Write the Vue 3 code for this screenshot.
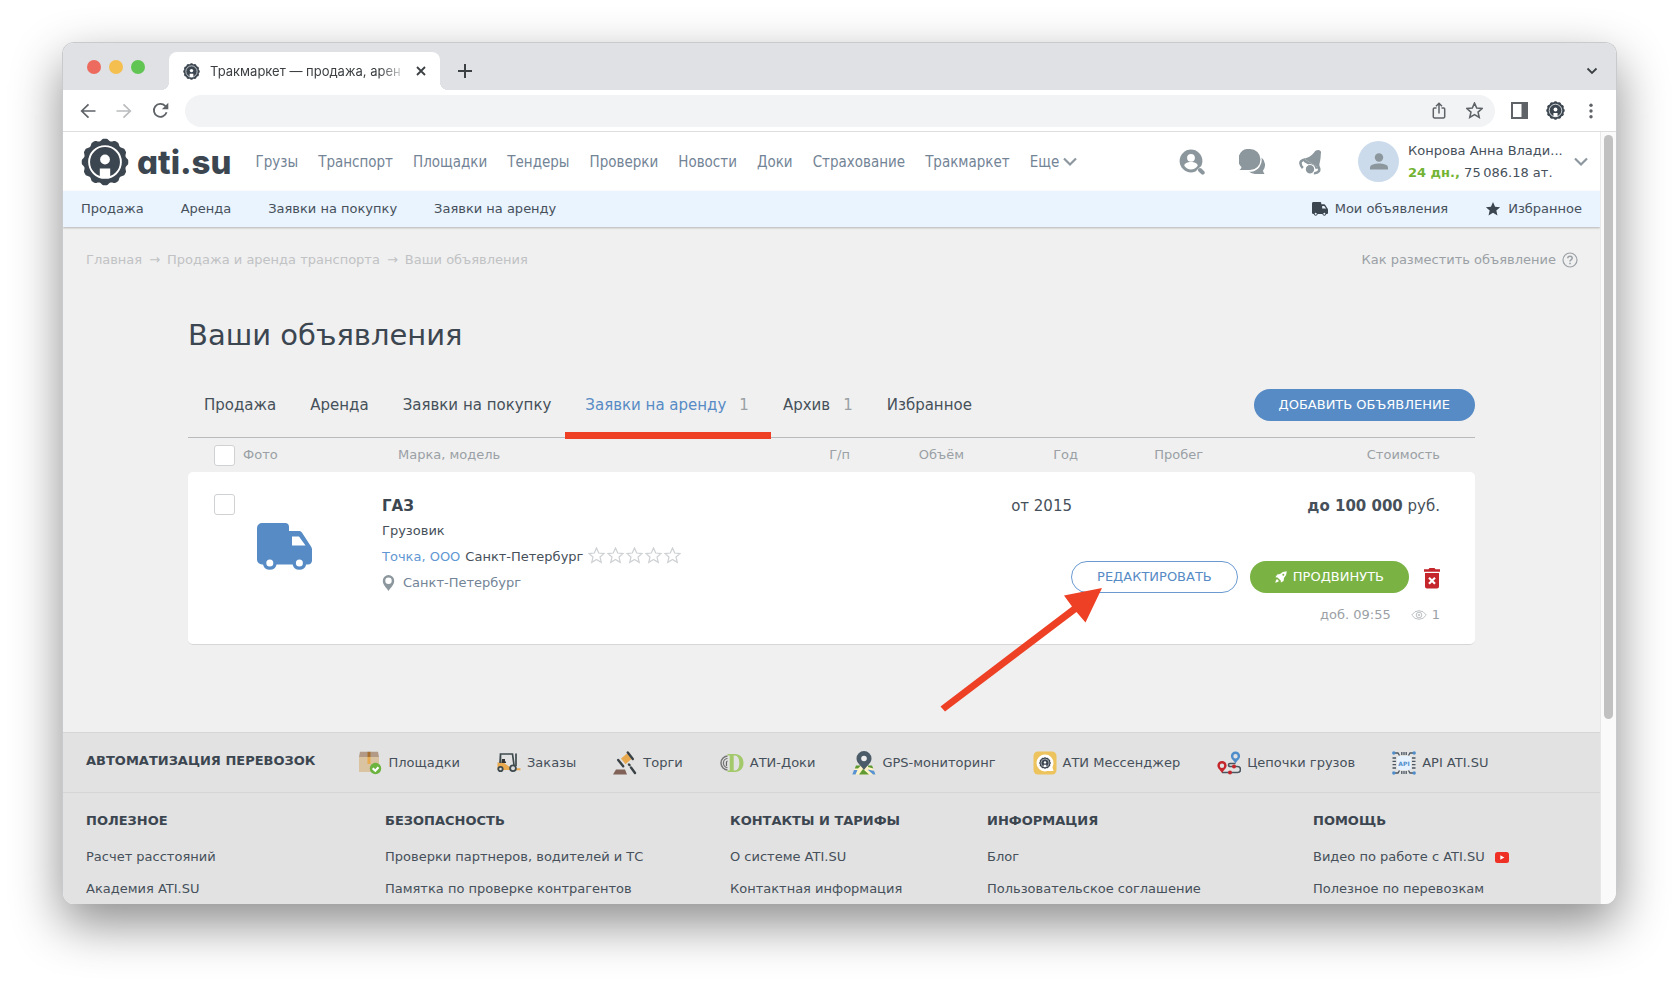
<script setup>
import { ref } from 'vue'

const gear = (() => {
  const pts = []
  for (let i = 0; i < 240; i++) {
    const a = (i / 240) * Math.PI * 2
    const wave = Math.min(0.6, Math.cos(a * 12) * 1.2)
    const r = 22.6 + 1.1 * wave
    pts.push(`${(24 + r * Math.sin(a)).toFixed(2)} ${(24 - r * Math.cos(a)).toFixed(2)}`)
  }
  return `M${pts.join('L')}Z`
})()

const nav = ['Грузы', 'Транспорт', 'Площадки', 'Тендеры', 'Проверки', 'Новости', 'Доки', 'Страхование', 'Тракмаркет']
const subnav = ['Продажа', 'Аренда', 'Заявки на покупку', 'Заявки на аренду']
const tabs = [
  { name: 'Продажа' },
  { name: 'Аренда' },
  { name: 'Заявки на покупку' },
  { name: 'Заявки на аренду', count: 1 },
  { name: 'Архив', count: 1 },
  { name: 'Избранное' },
]
const active = ref('Заявки на аренду')
const address = ref('')
const services = [
  { id: 'box', name: 'Площадки' },
  { id: 'lift', name: 'Заказы' },
  { id: 'hammer', name: 'Торги' },
  { id: 'docs', name: 'АТИ-Доки' },
  { id: 'gps', name: 'GPS-мониторинг' },
  { id: 'chat', name: 'АТИ Мессенджер' },
  { id: 'route', name: 'Цепочки грузов' },
  { id: 'api', name: 'API ATI.SU' },
]
const columns = [
  { title: 'ПОЛЕЗНОЕ', links: ['Расчет расстояний', 'Академия ATI.SU'] },
  { title: 'БЕЗОПАСНОСТЬ', links: ['Проверки партнеров, водителей и ТС', 'Памятка по проверке контрагентов'] },
  { title: 'КОНТАКТЫ И ТАРИФЫ', links: ['О системе ATI.SU', 'Контактная информация'] },
  { title: 'ИНФОРМАЦИЯ', links: ['Блог', 'Пользовательское соглашение'] },
  { title: 'ПОМОЩЬ', links: ['Видео по работе с ATI.SU', 'Полезное по перевозкам'], video: 0 },
]
</script>

<template>
  <svg class="defs" aria-hidden="true">
    <symbol id="logo" viewBox="0 0 48 48">
      <path :d="gear" fill="#3c4650" />
      <circle cx="24" cy="24" r="15.900" fill="none" stroke="#fff" stroke-width="1.900" />
      <circle cx="24" cy="21.500" r="4.900" fill="#fff" />
      <path d="M18.800 30.500h10.400V39q-5.200 2-10.400 0z" fill="#fff" />
    </symbol>
    <symbol id="star" viewBox="0 0 24 24">
      <path d="M12 1.500l3.100 7 7.600.700-5.700 5 1.700 7.500L12 17.700l-6.700 4 1.700-7.500-5.700-5 7.600-.700z" />
    </symbol>
    <symbol id="truck" viewBox="0 0 55 48">
      <path fill-rule="evenodd" d="M5 0h23a4 4 0 0 1 4 4v4h10.500a3 3 0 0 1 2.400 1.400L54 23.500a5 5 0 0 1 1 3V37a4 4 0 0 1-4 4.500h-1.800a7 7 0 0 1-13.600 0H19.600a7 7 0 0 1-13.600 0H5a5 5 0 0 1-5-5V5a5 5 0 0 1 5-5zM35 13.500V22.500H48.500L42 13.500zM12.800 36.500a3.500 3.500 0 1 0 0 7 3.500 3.500 0 0 0 0-7zm29.600 0a3.500 3.500 0 1 0 0 7 3.500 3.500 0 0 0 0-7z" />
    </symbol>
    <symbol id="person" viewBox="0 0 18 18">
      <circle cx="9" cy="4.500" r="4.200" /><path d="M0 16.500v-2C0 11.500 5 10.500 9 10.500s9 1 9 4v2z" />
    </symbol>
  </svg>

  <div class="window">
    <div class="strip">
      <div class="lights"><i class="red"></i><i class="yellow"></i><i class="green"></i></div>
      <div class="tab">
        <svg class="i16"><use href="#logo" /></svg>
        <span class="tab-title">Тракмаркет — продажа, арен</span>
        <button class="plain" aria-label="Закрыть вкладку">
          <svg width="10" height="10" viewBox="0 0 10 10"><path d="M1 1l8 8M9 1L1 9" stroke="#3c4043" stroke-width="1.800" /></svg>
        </button>
      </div>
      <button class="plain new-tab" aria-label="Новая вкладка">
        <svg width="14" height="14" viewBox="0 0 14 14"><path d="M7 0v14M0 7h14" stroke="#3c4043" stroke-width="2" /></svg>
      </button>
      <button class="plain strip-end" aria-label="Поиск вкладок">
        <svg width="12" height="8" viewBox="0 0 12 8"><path d="M1.500 1.500L6 6l4.500-4.500" fill="none" stroke="#3c4043" stroke-width="1.800" /></svg>
      </button>
    </div>

    <div class="toolbar">
      <button class="plain" aria-label="Назад">
        <svg width="16" height="16" viewBox="0 0 16 16" fill="none" stroke="#5f6368" stroke-width="1.700"><path d="M15.500 8H2M8.500 1.300L1.700 8l6.800 6.700" /></svg>
      </button>
      <button class="plain fwd" aria-label="Вперёд">
        <svg width="16" height="16" viewBox="0 0 16 16" fill="none" stroke="#babcbe" stroke-width="1.700"><path d="M.5 8H14M7.500 1.300L14.300 8l-6.800 6.700" /></svg>
      </button>
      <button class="plain" aria-label="Обновить">
        <svg width="17" height="17" viewBox="0 0 17 17"><path d="M14.600 10.300a6.500 6.500 0 1 1-1.400-6.400L15 5.700" fill="none" stroke="#5f6368" stroke-width="1.800" /><path d="M16.300.8v6.400H9.900z" fill="#5f6368" /></svg>
      </button>
      <div class="address">
        <input v-model="address" type="text" aria-label="Адресная строка" />
        <svg width="14" height="17" viewBox="0 0 14 17" fill="none" stroke="#5f6368" stroke-width="1.500"><path d="M4.500 6H2.300a1 1 0 0 0-1 1v7.700a1.200 1.200 0 0 0 1.200 1.200h9a1.200 1.200 0 0 0 1.200-1.200V7a1 1 0 0 0-1-1H9.500M7 11.500V1.500M4 4.200l3-2.900 3 2.900" /></svg>
        <svg width="17" height="17" viewBox="0 0 24 24" fill="none" stroke="#5f6368" stroke-width="2.200"><use href="#star" /></svg>
      </div>
      <div class="tools">
        <svg width="17" height="17" viewBox="0 0 17 17"><path d="M1 1h15v15H1z" fill="#fff" stroke="#5f6368" stroke-width="2" /><path d="M10.500 1H16v15h-5.500z" fill="#5f6368" /></svg>
        <svg class="i19"><use href="#logo" /></svg>
        <svg width="4" height="16" viewBox="0 0 4 16" fill="#5f6368"><circle cx="2" cy="2.200" r="1.700" /><circle cx="2" cy="8" r="1.700" /><circle cx="2" cy="13.800" r="1.700" /></svg>
      </div>
    </div>

    <div class="view">
      <div class="page">
        <header class="head">
          <a class="logo" href="#"><svg class="i47"><use href="#logo" /></svg><span>ati.su</span></a>
          <nav class="nav">
            <a v-for="n in nav" :key="n" href="#">{{ n }}</a>
            <a class="more" href="#">Еще
              <svg width="14" height="10" viewBox="0 0 14 10"><path d="M1 1.500l6 6 6-6" fill="none" stroke="#8c979f" stroke-width="2.200" /></svg>
            </a>
          </nav>
          <div class="head-icons">
            <button class="plain" aria-label="Поиск партнеров">
              <svg width="26" height="26" viewBox="0 0 26 26"><circle cx="12" cy="12" r="11.400" fill="#8c979d" /><circle cx="12" cy="8.800" r="3.900" fill="#fff" /><path d="M5.300 16.800c0-2.500 3.300-3.700 6.700-3.700s6.700 1.200 6.700 3.700a8 8 0 0 1-13.400 0z" fill="#fff" /><path d="M19.500 19.500l4.200 4.200" stroke="#fff" stroke-width="6" /><path d="M21 21l2.700 2.700" stroke="#8c979d" stroke-width="4" stroke-linecap="round" /></svg>
            </button>
            <button class="plain" aria-label="Сообщения">
              <svg width="26" height="26" viewBox="0 0 26 26" fill="#8c979d"><path d="M11 0a10.500 10.500 0 0 1 0 21H.5q2-1.500 2-3A10.500 10.500 0 0 1 11 0z" /><path d="M22.500 8.500a9.500 9.500 0 0 1 1.500 13.200q.2 1.600 1.500 3.300H16a10 10 0 0 1-6-2.200h2.500A12 12 0 0 0 22.500 8.500z" /></svg>
            </button>
            <button class="plain" aria-label="Уведомления">
              <svg width="23" height="26" viewBox="0 0 23 26"><path d="M5 9.800C9 9 13 6.500 15.300 3.300 16.500 1 20 .200 21.500 2c1 1.200.3 2 .3 3.500 0 5-1.500 8.500-1.800 13.500z" fill="#8c979d" /><path d="M6 10.500Q1 11.500 1.500 14.500q.2 2.500 2.300 4.500M19 17q2 3.500.8 5.300-1.300 2-5 1.900" fill="none" stroke="#8c979d" stroke-width="2.600" /><path d="M5 9.800l15 9.200-3 1-12-7z" fill="#8c979d" /><circle cx="11" cy="20.300" r="4.800" fill="#8c979d" stroke="#fff" stroke-width="1.200" /></svg>
            </button>
          </div>
          <div class="avatar"><svg width="18" height="18" fill="#8c979d"><use href="#person" /></svg></div>
          <div class="user">
            <div>Конрова Анна Влади...</div>
            <div><b>24 дн.,</b> 75&#8239;086.18 ат.</div>
          </div>
          <button class="plain" aria-label="Меню пользователя">
            <svg width="14" height="10" viewBox="0 0 14 10"><path d="M1 1.500l6 6 6-6" fill="none" stroke="#8c979f" stroke-width="2.200" /></svg>
          </button>
        </header>

        <nav class="subnav">
          <a v-for="s in subnav" :key="s" href="#">{{ s }}</a>
          <a class="mine" href="#"><svg width="16" height="14" fill="#3c4650"><use href="#truck" /></svg>Мои объявления</a>
          <a href="#"><svg width="16" height="16" fill="#3c4650"><use href="#star" /></svg>Избранное</a>
        </nav>

        <main>
          <div class="crumbs">
            <div><a href="#">Главная</a><span>→</span><a href="#">Продажа и аренда транспорта</a><span>→</span><a href="#">Ваши объявления</a></div>
            <a class="help" href="#">Как разместить объявление
              <svg width="16" height="16" viewBox="0 0 16 16" fill="none" stroke="#9aa0a5"><circle cx="8" cy="8" r="7" stroke-width="1.200" /><path d="M5.700 6.300q.2-2 2.300-2t2.300 1.800q0 1-1.200 1.800T8 9.500" stroke-width="1.500" /><path d="M8 10.700v1.600" stroke-width="1.600" /></svg>
            </a>
          </div>

          <div class="content">
            <h1>Ваши объявления</h1>
            <div class="tabs">
              <button v-for="t in tabs" :key="t.name" class="plain" :class="{ active: t.name === active }" @click="active = t.name">
                {{ t.name }}<span v-if="t.count">{{ t.count }}</span>
              </button>
              <button class="pill add">ДОБАВИТЬ ОБЪЯВЛЕНИЕ</button>
            </div>

            <table>
              <colgroup><col class="c-photo" /><col /><col class="c-num" /><col class="c-num" /><col class="c-num" /><col class="c-run" /><col class="c-price" /></colgroup>
              <thead>
                <tr>
                  <th><label class="check"><input type="checkbox" />Фото</label></th>
                  <th class="model-h">Марка, модель</th>
                  <th class="r">Г/п</th>
                  <th class="r">Объём</th>
                  <th class="r">Год</th>
                  <th class="r">Пробег</th>
                  <th class="r price">Стоимость</th>
                </tr>
              </thead>
              <tbody>
                <tr>
                  <td rowspan="2" class="photo">
                    <input type="checkbox" aria-label="Выбрать ГАЗ" />
                    <svg width="55" height="48" fill="#578bc5"><use href="#truck" /></svg>
                  </td>
                  <td rowspan="2" class="model">
                    <h2>ГАЗ</h2>
                    <p>Грузовик</p>
                    <p class="firm"><a href="#">Точка, ООО</a> Санкт-Петербург
                      <span class="stars"><svg v-for="i in 5" :key="i" width="17" height="17" viewBox="0 0 24 24" fill="none" stroke="#cfd2d4" stroke-width="1.800"><use href="#star" /></svg></span>
                    </p>
                    <p class="place">
                      <svg width="13" height="16" viewBox="0 0 13 16"><path fill-rule="evenodd" d="M6.500 0a5.700 5.700 0 0 1 5.700 5.700C12.200 10 8.500 12.500 6.500 16 4.500 12.500.8 10 .8 5.700A5.700 5.700 0 0 1 6.500 0zm0 2.500a3.200 3.200 0 1 0 0 6.400 3.200 3.200 0 0 0 0-6.400z" fill="#8c979d" /></svg>
                      Санкт-Петербург
                    </p>
                  </td>
                  <td></td>
                  <td></td>
                  <td class="r year">от 2015</td>
                  <td></td>
                  <td class="r price top-right"><b>до 100 000</b> руб.</td>
                </tr>
                <tr>
                  <td colspan="5" class="acts">
                    <div class="buttons">
                      <div class="edit-box">
                        <button class="pill edit">РЕДАКТИРОВАТЬ</button>
                        <svg class="arrow" width="163" height="125" viewBox="0 0 163 125"><path d="M0.500 119.500L132 19.500 124 8.500 162 1 145.500 35.500 136.500 25 5 124.500z" fill="#ed4025" /></svg>
                      </div>
                      <button class="pill promote">
                        <svg width="12" height="12" viewBox="0 0 12 12"><path d="M11.800.2Q7.500.2 5 3L2.200 3.500.5 6.200l2 .2 3.200 3.200.2 2 2.700-1.700L9 7q2.800-2.500 2.800-6.800zM2 8Q.6 9 .3 11.700 3 11.400 4 10z" fill="#fff" /><circle cx="8.300" cy="3.700" r="1" fill="#7ab344" /></svg>
                        ПРОДВИНУТЬ
                      </button>
                      <button class="plain" aria-label="Удалить">
                        <svg width="16" height="21" viewBox="0 0 16 21"><path d="M0 1.200h4.500L5.500 0h5l1 1.200H16v2.600H0zM1 5h14v13.500a2 2 0 0 1-2 2H3a2 2 0 0 1-2-2z" fill="#c4262b" /><path d="M5 9.700l6 6M11 9.700l-6 6" stroke="#fff" stroke-width="2.200" /></svg>
                      </button>
                    </div>
                    <div class="meta">
                      <span>доб. 09:55</span>
                      <svg width="16" height="10" viewBox="0 0 16 10" fill="none" stroke="#bcc1c4"><path d="M.7 5Q3.500.7 8 .7T15.300 5Q12.500 9.300 8 9.300T.7 5z" /><circle cx="8" cy="5" r="2.800" /><circle cx="8" cy="5" r=".8" /></svg>
                      <span class="views">1</span>
                    </div>
                  </td>
                </tr>
              </tbody>
            </table>
          </div>
        </main>

        <footer>
          <div class="services">
            <strong>АВТОМАТИЗАЦИЯ ПЕРЕВОЗОК</strong>
            <a v-for="s in services" :key="s.id" href="#">
              <svg width="24" height="24" viewBox="0 0 24 24">
                <template v-if="s.id === 'box'">
                  <path d="M1 6h20v15H1z" fill="#d9c3a0" /><path d="M2 .800h18L21 6H1z" fill="#b39a86" /><path d="M9.500.800h3V6h-3z" fill="#a5702f" /><path d="M9.500 6h3v7h-3z" fill="#e8aa50" /><circle cx="17.500" cy="17.500" r="5.700" fill="#6cb33f" /><path d="M14.700 17.300l2.600 2.500 3.200-3.500" fill="none" stroke="#fff" stroke-width="2.200" />
                </template>
                <template v-else-if="s.id === 'lift'">
                  <path d="M.500 11.500h6l7 5v2.500H.500zM17 17.200h6.500v2H17z" fill="#e8a94f" /><path d="M3.500 12V3h12l1.500 11M19 2.500V15M3.500 3l-.5 9" fill="none" stroke="#3e4a4d" stroke-width="1.700" /><path d="M5 8h3v2.500h1v1.500H4.500z" fill="#333" /><circle cx="3.500" cy="18" r="2.200" fill="#ddd" stroke="#3e4a4d" stroke-width="1.800" /><circle cx="16" cy="17.300" r="2.900" fill="#ddd" stroke="#3e4a4d" stroke-width="1.800" />
                </template>
                <template v-else-if="s.id === 'hammer'">
                  <path d="M3 18.500h9l2 5H0z" fill="#806258" /><path d="M8 7.500l6-5 4.500 5.500-6 5.200z" fill="#e8a94f" /><path d="M14.800 1.500l5 6.500M5.200 9l5 6.200M16 13.500l.5.6M18 16.500l4 5.500" stroke="#3b4245" stroke-width="2.400" stroke-linecap="round" />
                </template>
                <template v-else-if="s.id === 'docs'">
                  <circle cx="8" cy="12" r="7" fill="none" stroke="#777" stroke-width="1.500" /><circle cx="8" cy="12" r="4.600" fill="none" stroke="#777" stroke-width="1.300" /><path d="M6.500 15v-4a1.800 1.800 0 0 1 3 0v4" fill="none" stroke="#666" stroke-width="1.300" /><path d="M7.500 3H16v18H7.500z" fill="#e2e2e2" /><path fill-rule="evenodd" d="M7.500 3H15c5 0 8.500 3.500 8.500 9S20 21 15 21H7.500v-1.500h2.200V4.500H7.500zm6.200 1.500v15h1c3 0 4.600-2.800 4.600-7.500s-1.600-7.500-4.600-7.500z" fill="#a3c96b" />
                </template>
                <template v-else-if="s.id === 'gps'">
                  <path d="M4 15h16l3.500 8.500H.5z" fill="#fff3c8" /><path d="M4 14.500h5l-3 3H2.800zM7 23.500L11 18l6 5.500zM16 14.500h4l1.300 3L16 16z" fill="#5f9a32" /><path d="M2 19h3.500L3.500 23.500H.300zM15.500 18.500l6.500 1.200 1.500 3.800H21z" fill="#5a93d4" /><path fill-rule="evenodd" d="M12 0a7.500 7.500 0 0 1 7.500 7.500C19.500 12 14.500 15 12 19 9.500 15 4.500 12 4.500 7.500A7.500 7.500 0 0 1 12 0z" fill="#4b5c68" /><circle cx="12" cy="7.500" r="2.800" fill="#eee" />
                </template>
                <template v-else-if="s.id === 'chat'">
                  <rect x=".5" y=".5" width="23" height="23" rx="4.500" fill="#edc35d" /><circle cx="12" cy="12" r="8.500" fill="#fff" /><path d="M14 20h6.500l-1.800-6z" fill="#fff" /><use href="#logo" x="6" y="6" width="12" height="12" />
                </template>
                <template v-else-if="s.id === 'route'">
                  <path d="M18.500 12.500h-5.500a1.500 1.500 0 0 0 0 3h7.500a3 3 0 0 1 0 6H5" fill="none" stroke="#4b5661" stroke-width="1.600" /><path fill-rule="evenodd" d="M18.500.500a4.600 4.600 0 0 1 4.600 4.600c0 3-3 4.500-4.600 7.500-1.600-3-4.600-4.500-4.600-7.500A4.600 4.600 0 0 1 18.500.500zm0 2.500a2.200 2.200 0 1 0 0 4.400 2.200 2.200 0 0 0 0-4.400z" fill="#4f8dcb" /><path fill-rule="evenodd" d="M5 10a4.600 4.600 0 0 1 4.600 4.600c0 3-3 4.500-4.600 7.500-1.600-3-4.600-4.500-4.600-7.500A4.600 4.600 0 0 1 5 10zm0 2.500a2.200 2.200 0 1 0 0 4.400 2.200 2.200 0 0 0 0-4.400z" fill="#c4262b" /><circle cx="13" cy="21.500" r="2" fill="#c4262b" /><circle cx="17" cy="15.500" r="2" fill="#c4262b" />
                </template>
                <template v-else>
                  <path d="M9.800 1v3M12 1v3M14.200 1v3M9.800 20v3M12 20v3M14.200 20v3M.5 7h3.500M.5 10.300h3.500M.5 13.600h3.500M.5 17h3.500M20 7h3.500M20 10.300h3.500M20 13.600h3.500M20 17h3.500M3 2h3l1.500 2.500M21 2h-3l-1.500 2.500M3 22h3l1.500-2.500M21 22h-3l-1.500-2.500" fill="none" stroke="#4b5661" stroke-width="1.300" /><rect x="5" y="5" width="14" height="14" rx="3" fill="#e6f2ff" /><g fill="#4f8dcb"><circle cx="1.800" cy="2" r="1.700" /><circle cx="22.200" cy="2" r="1.700" /><circle cx="1.800" cy="22" r="1.700" /><circle cx="22.200" cy="22" r="1.700" /></g><text x="12" y="14.600" text-anchor="middle" class="api">API</text>
                </template>
              </svg>
              {{ s.name }}
            </a>
          </div>
          <div class="cols">
            <section v-for="c in columns" :key="c.title">
              <h3>{{ c.title }}</h3>
              <a v-for="(l, i) in c.links" :key="l" href="#">{{ l }}
                <svg v-if="c.video === i" width="14" height="11" viewBox="0 0 14 11"><rect width="14" height="11" rx="2.500" fill="#ee3124" /><path d="M5.300 3.200l4 2.300-4 2.300z" fill="#fff" /></svg>
              </a>
            </section>
          </div>
        </footer>
      </div>
      <div class="scroll"><i></i></div>
    </div>
  </div>
</template>

<style>
body { background: #fff; }
#app { height: 100vh; overflow: hidden; }
</style>

<style scoped>
* { box-sizing: border-box; }
a { color: inherit; text-decoration: none; }
h1, h2, h3, p { margin: 0; font-weight: 400; }
svg { display: block; flex: none; }
.defs { position: absolute; width: 0; height: 0; }
.plain { display: flex; align-items: center; padding: 0; border: 0; background: none; font: inherit; color: inherit; }
.i16 { width: 17px; height: 17px; }
.i19 { width: 19px; height: 19px; }
.i47 { width: 48px; height: 48px; }

.window {
  display: flex;
  flex-direction: column;
  height: calc(100vh - 126px);
  margin: 42px 63px 0 62px;
  overflow: hidden;
  border: 1px solid #c9cacc;
  border-bottom: 0;
  border-radius: 12px;
  background: #fff;
  box-shadow: 0 20px 50px rgba(0, 0, 0, 0.45);
  font-family: "DejaVu Sans", Verdana, sans-serif;
  font-size: 13px;
  line-height: 20px;
  color: #46505a;
}
.strip { display: flex; align-items: flex-end; flex: none; height: 47px; padding: 0 18px 0 24px; background: #dfe1e5; }
.lights { display: flex; gap: 8px; padding-bottom: 16px; }
.lights i { width: 14px; height: 14px; border-radius: 50%; }
.red { background: #ed6a5e; }
.yellow { background: #f5bf4f; }
.green { background: #61c554; }
.tab { position: relative; display: flex; align-items: center; width: 271px; height: 38px; margin-left: 24px; padding: 0 14px; border-radius: 8px 8px 0 0; background: #fff; font: 13px/20px Inter, sans-serif; color: #3c4043; }
.tab::before, .tab::after { content: ""; position: absolute; bottom: 0; width: 8px; height: 8px; }
.tab::before { right: 100%; background: radial-gradient(circle at 0 0, transparent 8px, #fff 8px); }
.tab::after { left: 100%; background: radial-gradient(circle at 100% 0, transparent 8px, #fff 8px); }
.tab-title { flex: 1; margin: 0 8px 0 10px; overflow: hidden; white-space: nowrap; -webkit-mask-image: linear-gradient(to right, #000 86%, transparent); mask-image: linear-gradient(to right, #000 86%, transparent); }
.new-tab { height: 38px; margin-left: 18px; }
.strip-end { height: 38px; margin-left: auto; }
.toolbar { display: flex; align-items: center; flex: none; height: 42px; padding: 0 23px 0 17px; border-bottom: 1px solid #dcdddf; }
.toolbar .fwd { margin: 0 20px; }
.address { display: flex; align-items: center; flex: 1; gap: 20px; height: 32px; margin: 0 16px; padding: 0 12px 0 16px; border-radius: 16px; background: #f1f3f4; }
.address input { flex: 1; min-width: 0; border: 0; outline: 0; background: none; font: 14px Roboto, sans-serif; }
.tools { display: flex; align-items: center; gap: 18px; }
.tools svg:last-child { margin-left: 6px; }

.view { display: flex; flex: 1; min-height: 0; }
.page { flex: 1; min-width: 0; overflow: hidden; background: #f0f0f0; }
.scroll { flex: none; width: 16px; padding: 3px 3px 0; border-left: 1px solid #e8e8e8; background: #fafafa; }
.scroll i { display: block; width: 9px; height: 76%; border-radius: 5px; background: #c1c1c1; }

.head { display: flex; align-items: center; height: 59px; padding: 0 12px 0 18px; background: #fff; }
.logo { display: flex; align-items: center; gap: 8px; color: #3c4650; }
.logo span { font: 800 33px/36px Inter, sans-serif; font-feature-settings: "cv11"; }
.nav { display: flex; gap: 20px; margin-left: 24px; font: 15px/20px "DejaVu Sans Condensed", Tahoma, sans-serif; color: #738496; }
.more { display: flex; align-items: center; gap: 4px; }
.head-icons { display: flex; gap: 34px; margin-left: auto; }
.avatar { display: flex; align-items: center; justify-content: center; width: 41px; height: 41px; margin-left: 36px; border-radius: 50%; background: #cbdbeb; }
.user { width: 158px; margin: 0 8px 0 9px; line-height: 22px; white-space: nowrap; }
.user b { color: #73b434; }

.subnav { position: relative; display: flex; align-items: center; gap: 37px; height: 36px; padding: 0 18px; background: #e9f4ff; box-shadow: 0 1px 2px rgba(0, 0, 0, 0.25); }
.subnav a { display: flex; align-items: center; gap: 7px; }
.mine { margin-left: auto; }

.crumbs { display: flex; justify-content: space-between; padding: 23px 22px 0 23px; color: #c0c2c4; }
.crumbs span { margin: 0 7px; }
.help { display: flex; align-items: center; gap: 6px; color: #9aa0a5; }
.content { padding: 47px 125px 87px; }
h1 { font-size: 29px; line-height: 36px; color: #3c4650; }
.tabs { display: flex; align-items: center; gap: 2px; height: 68px; margin-top: 17px; padding-top: 2px; border-bottom: 1px solid #b8bbbd; font-size: 15px; }
.tabs .plain { position: relative; height: 100%; padding: 0 16px; }
.tabs .plain span { margin-left: 13px; color: #9aa0a5; }
.tabs .active { color: #578bc5; }
.tabs .active::after { content: ""; position: absolute; right: -6px; bottom: -2px; left: -4px; height: 7px; background: #ed4025; }
.pill { display: flex; align-items: center; justify-content: center; gap: 6px; height: 32px; padding: 0 25px; border: 0; border-radius: 16px; font: 13px/16px "DejaVu Sans", Verdana, sans-serif; color: #fff; white-space: nowrap; }
.add { margin-left: auto; background: #578bc5; }

table { width: 100%; table-layout: fixed; border-spacing: 0; }
.c-photo { width: 194px; }
.c-num { width: 114px; }
.c-run { width: 125px; }
.c-price { width: 256px; }
th { height: 34px; padding: 0; font-weight: 400; color: #9aa0a5; text-align: left; }
th.model-h { padding-left: 16px; }
th.r, td.r { padding-right: 16px; text-align: right; }
th.price, td.price { padding-right: 35px; }
.check { display: flex; align-items: center; gap: 8px; padding-left: 26px; }
input[type="checkbox"] { appearance: none; display: block; width: 21px; height: 21px; margin: 0; border: 1px solid #cfd1d3; border-radius: 3px; background: #fff; }
td { padding: 0; vertical-align: top; background: #fff; }
.photo { height: 173px; padding: 22px 0 0 26px; border-radius: 5px 0 0 5px; }
.photo svg { margin: 8px 0 0 43px; }
.photo, .model, .acts { border-bottom: 1px solid #d6d6d6; }
.model { padding-top: 24px; }
.model h2 { font-size: 15px; font-weight: 700; color: #3c4650; }
.model p { display: flex; align-items: center; margin-top: 6px; white-space: nowrap; }
.model h2 + p { margin-top: 5px; }
.firm { gap: 5px; }
.firm a { color: #5f97d3; }
.stars { display: flex; gap: 2px; padding-bottom: 3px; }
.model .place { gap: 8px; color: #738496; }
td.r { height: 89px; padding-top: 24px; font-size: 15px; }
td.year { padding-right: 22px; }
.top-right { border-top-right-radius: 5px; }
.acts { padding-right: 35px; border-bottom-right-radius: 5px; }
.buttons { display: flex; align-items: center; justify-content: flex-end; gap: 12px; }
.buttons > .plain { margin-left: 3px; padding-top: 2px; }
.edit-box { position: relative; }
.edit { border: 1px solid #6a9ad0; background: #fff; color: #578bc5; }
.promote { background: #7ab344; }
.arrow { position: absolute; top: 26px; left: -131px; pointer-events: none; }
.meta { display: flex; align-items: center; justify-content: flex-end; margin-top: 12px; color: #9aa0a5; }
.meta svg { margin: 0 5px 0 20px; }

footer { border-top: 1px solid #d6d6d6; background: #e2e2e2; }
.services { display: flex; align-items: center; gap: 37px; height: 60px; padding: 0 22px 0 23px; border-bottom: 1px solid #d6d6d6; white-space: nowrap; }
.services strong { margin-right: 6px; padding-bottom: 4px; color: #3c4650; }
.services a { display: flex; align-items: center; gap: 6px; }
.api { font: 700 6px "DejaVu Sans", sans-serif; fill: #4f8dcb; }
.cols { display: grid; grid-template-columns: 299fr 345fr 257fr 326fr 265fr; padding: 18px 22px 0 23px; }
h3 { margin-bottom: 16px; font-size: 13px; line-height: 20px; font-weight: 700; color: #3c4650; }
.cols a { display: flex; align-items: center; gap: 10px; margin-bottom: 12px; white-space: nowrap; }
</style>
